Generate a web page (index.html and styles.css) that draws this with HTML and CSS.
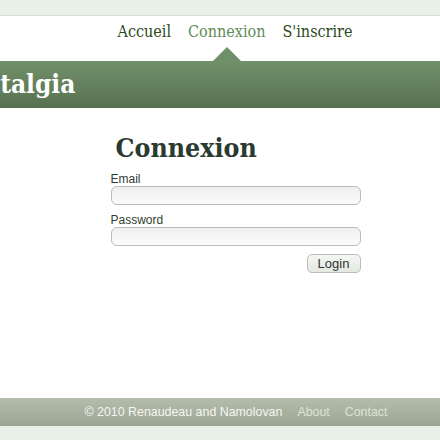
FILE: index.html
```html
<!DOCTYPE html>
<html lang="fr">
<head>
<meta charset="utf-8">
<title>Connexion</title>
<link rel="stylesheet" href="styles.css">
</head>
<body>
<div class="topstrip"></div>
<div class="page">
  <nav class="nav">
    <a class="nav-link" href="#">Accueil</a>
    <a class="nav-link active" href="#">Connexion</a>
    <a class="nav-link" href="#">S'inscrire</a>
  </nav>
  <header class="banner">
    <h1 class="brand">Nostalgia</h1>
  </header>
  <main class="content">
    <form class="login">
      <h2 class="title">Connexion</h2>
      <label class="label" for="email">Email</label>
      <input class="field" id="email" type="text">
      <label class="label" for="pw">Password</label>
      <input class="field" id="pw" type="password">
      <div class="actions"><button class="btn" type="button">Login</button></div>
    </form>
  </main>
</div>
<footer class="footer">
  <span class="copy">© 2010 Renaudeau and Namolovan</span>
  <a class="foot-link" href="#">About</a>
  <a class="foot-link" href="#">Contact</a>
</footer>
</body>
</html>
```
FILE: styles.css
```css
html, body { margin: 0; padding: 0; }
body {
  background: #e8f1e7;
  font-family: "DejaVu Serif Condensed", "DejaVu Serif", serif;
  font-stretch: condensed;
  overflow: hidden;
  height: 440px;
}
.topstrip {
  height: 15px;
  background: #e8f1e7;
  border-bottom: 1px solid #d3ddd1;
}
.page {
  background: #fff;
  height: 382px;
}
.nav {
  height: 45px;
  display: flex;
  justify-content: center;
  gap: 17px;
  padding-left: 30px;
  box-sizing: border-box;
  padding-top: 5px;
}
.nav-link {
  font-size: 16px;
  color: #2c4a1c;
  text-decoration: none;
  line-height: 22px;
  position: relative;
}
.nav-link.active { color: #5f8c57; }
.nav-link.active::after {
  content: "";
  position: absolute;
  left: 50%;
  margin-left: -14px;
  top: 26px;
  border-left: 14px solid transparent;
  border-right: 14px solid transparent;
  border-bottom: 14px solid #6f8f69;
}
.banner {
  height: 47px;
  background: linear-gradient(#70906a, #58714f);
  overflow: hidden;
}
.brand {
  margin: 0 0 0 -50px;
  font-size: 26px;
  font-weight: bold;
  color: #fff;
  line-height: 47px;
  white-space: nowrap;
}
.content {
  display: flex;
  justify-content: center;
  padding-left: 31px;
}
.login {
  width: 250px;
  display: flex;
  flex-direction: column;
  padding-top: 25px;
}
.title {
  margin: 0 0 9px 5px;
  font-size: 26.5px;
  line-height: 30px;
  font-weight: bold;
  color: #2a3a30;
}
.label {
  font-family: "Liberation Sans", Arial, sans-serif;
  font-size: 12px;
  line-height: 14px;
  color: #2f3d30;
}
.field {
  height: 19px;
  box-sizing: border-box;
  border: 1px solid #b9bcb9;
  border-radius: 6px;
  background: linear-gradient(#eef0ee, #fbfbfb);
  margin: 0 0 8px 0;
  padding: 0 4px;
}
.actions {
  display: flex;
  justify-content: flex-end;
  margin-top: 0;
}
.btn {
  font-family: "Liberation Sans", Arial, sans-serif;
  font-size: 13px;
  color: #333;
  height: 19px;
  width: 54px;
  padding: 0;
  border: 1px solid #b9bcb9;
  border-radius: 5px;
  background: linear-gradient(#f4f6f3, #e3e8e1);
}
.footer {
  height: 28px;
  background: linear-gradient(#b4bdac, #9ca594);
  display: flex;
  align-items: center;
  justify-content: center;
  gap: 15px;
  padding-left: 32px;
  font-family: "Liberation Sans", Arial, sans-serif;
  font-size: 12.4px;
}
.copy { color: #f4f6f2; }
.foot-link { color: #dde2d8; text-decoration: none; }
```
